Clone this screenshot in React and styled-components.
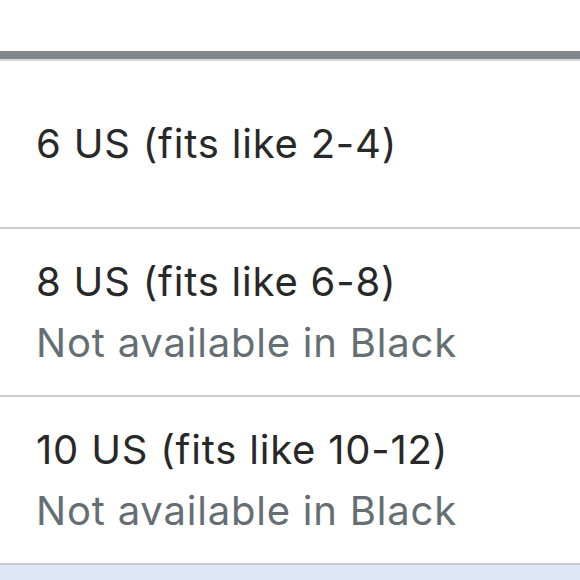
import React from "react"
import styled, { createGlobalStyle } from "styled-components"

const GlobalStyle = createGlobalStyle`
  html, body {
    margin: 0;
    padding: 0;
    background: #ffffff;
  }
  body {
    font-family: Inter, "Liberation Sans", Arial, sans-serif;
    -webkit-font-smoothing: antialiased;
  }
`

const sizes = [
  { label: "6 US (fits like 2-4)" },
  { label: "8 US (fits like 6-8)", note: "Not available in Black" },
  { label: "10 US (fits like 10-12)", note: "Not available in Black" },
]

const App = () => (
  <Page>
    <GlobalStyle />
    <Header />
    <SizeList>
      {sizes.map((size) => (
        <SizeOption key={size.label}>
          <SizeLabel>{size.label}</SizeLabel>
          {size.note && <SizeNote>{size.note}</SizeNote>}
        </SizeOption>
      ))}
    </SizeList>
    <Footer />
  </Page>
)

export default App

const Page = styled.div`
  width: 580px;
  height: 580px;
  overflow: hidden;
  display: flex;
  flex-direction: column;
`

const Header = styled.div`
  height: 51px;
  flex-shrink: 0;
  border-bottom: 8px solid #7f878b;
  box-shadow: 0 2px 0 #d3d9dc;
  margin-bottom: 2px;
`

const SizeList = styled.ul`
  list-style: none;
  margin: 0;
  padding: 0;
`

const SizeOption = styled.li`
  height: 168px;
  box-sizing: border-box;
  padding: 0 0 0 36px;
  display: flex;
  flex-direction: column;
  justify-content: center;
  gap: 17px;
  border-bottom: 2px solid #c9cccf;
`

const SizeLabel = styled.span`
  font-size: 40px;
  line-height: 44px;
  color: #282828;
  letter-spacing: 0.8px;
`

const SizeNote = styled.span`
  font-size: 40px;
  line-height: 44px;
  color: #646e73;
  letter-spacing: 0.8px;
`

const Footer = styled.div`
  flex: 1;
  background: #dde7f6;
`
